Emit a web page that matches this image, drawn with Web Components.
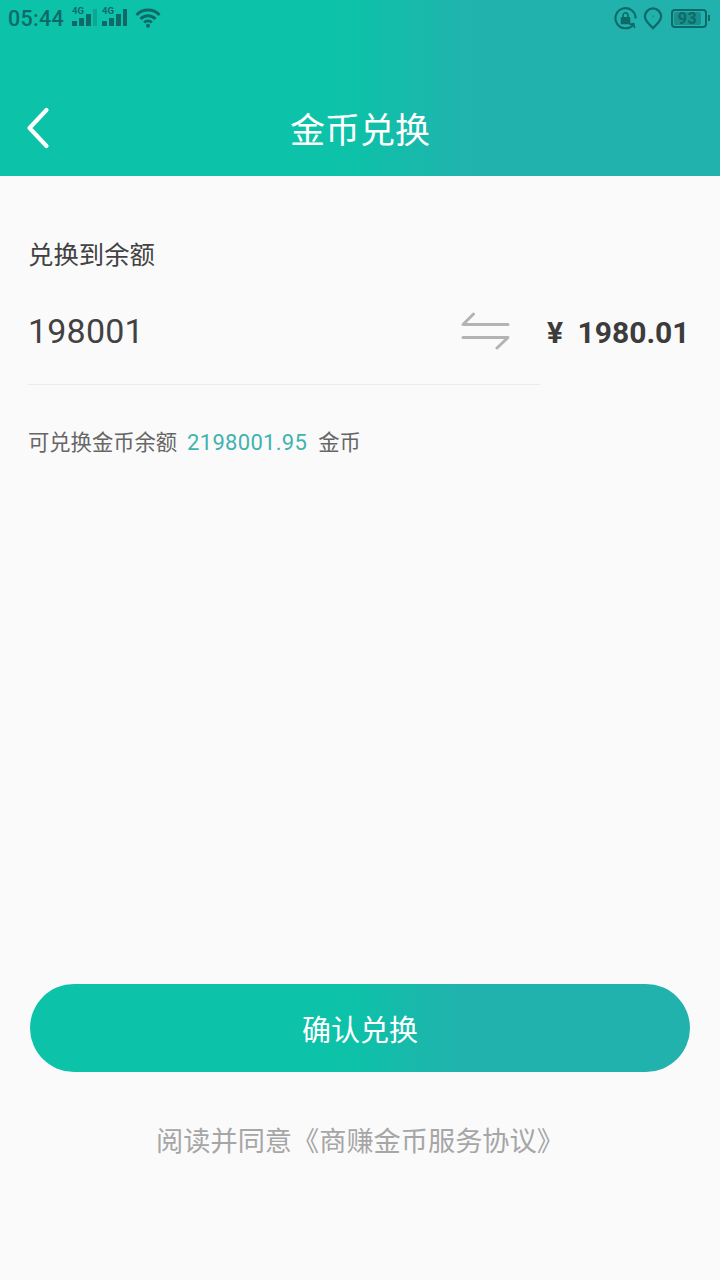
<!DOCTYPE html>
<html lang="zh">
<head>
<meta charset="utf-8">
<title>金币兑换</title>
<style>
  html, body { margin: 0; padding: 0; }
  body { width: 720px; height: 1280px; background: #fbfafb; overflow: hidden;
    font-family: Roboto, "Noto Sans CJK SC", sans-serif; }
  exchange-page { height: 1280px; }
</style>
</head>
<body>
<exchange-page>
  <app-header slot="header" title="金币兑换"></app-header>
  <exchange-form slot="main" coins="198001" money="¥ 1980.01" balance="2198001.95"></exchange-form>
  <confirm-button>确认兑换</confirm-button>
  <agreement-link>阅读并同意《商赚金币服务协议》</agreement-link>
</exchange-page>

<script>
const FONT = 'Roboto, "Noto Sans CJK SC", sans-serif';
const BRAND = "linear-gradient(90deg, #0cc2a8 0%, #0cc2a8 48%, #22b2ae 66%, #22b2ae 100%)";
const INK = "#0e6a68";

class StatusBar extends HTMLElement {
  constructor() {
    super();
    this.attachShadow({ mode: "open" });
  }

  signal(lastOpacity) {
    return `
      <svg width="26" height="30" viewBox="0 0 26 30" fill="${INK}">
        <text x="0" y="11" font-family="Roboto" font-size="9.5" font-weight="700">4G</text>
        <rect x="0" y="18" width="5" height="5"/>
        <rect x="7" y="15" width="5" height="8"/>
        <rect x="14" y="11" width="5" height="12"/>
        <rect x="21" y="6" width="4" height="17" opacity="${lastOpacity}"/>
      </svg>`;
  }

  connectedCallback() {
    this.shadowRoot.innerHTML = `
      <style>
        :host { display: flex; height: 36px; padding: 0 10px 0 8px; align-items: center;
          justify-content: space-between; color: ${INK}; font-family: ${FONT}; }
        .side { display: flex; align-items: center; }
        .time { width: 64px; font-size: 21.5px; font-weight: 500; letter-spacing: 0.3px; }
        .signal { margin-right: 4px; display: flex; }
        .wifi { margin-left: 3px; }
        .batt { margin-left: 8px; width: 36px; height: 19px; border: 2px solid ${INK};
          border-radius: 4px; box-sizing: border-box; padding: 1px 4px 1px 1px; display: flex; }
        .level { flex: 1; background: #1a8f8c; border-radius: 2px; font-size: 16px; font-weight: 700;
          line-height: 13px; text-align: center; letter-spacing: 0.6px; }
        .tip { width: 2px; height: 6px; background: ${INK}; margin-left: 1px; }
      </style>
      <div class="side">
        <span class="time">05:44</span>
        <span class="signal">${this.signal(0.3)}</span>
        <span class="signal">${this.signal(1)}</span>
        <svg class="wifi" width="26" height="20" viewBox="0 0 26 20" fill="none" stroke="${INK}" stroke-width="3">
          <path d="M1.5 7 A16 16 0 0 1 24.5 7"/>
          <path d="M5.5 11 A10.5 10.5 0 0 1 20.5 11"/>
          <path d="M9.2 14.5 A5.5 5.5 0 0 1 16.8 14.5"/>
          <circle cx="13" cy="17.8" r="2" fill="${INK}" stroke="none"/>
        </svg>
      </div>
      <div class="side">
        <svg width="23" height="23" viewBox="0 0 24 24" fill="none" stroke="${INK}" stroke-width="2.2">
          <path d="M20 18.5 A10.5 10.5 0 1 1 22.5 12"/>
          <path d="M21.5 22 L20.5 17.5 L16 18" stroke-width="1.8"/>
          <rect x="7" y="10.5" width="10" height="7.5" rx="1" fill="${INK}" stroke="none"/>
          <path d="M9.5 11 V8.5 a2.5 2.5 0 0 1 5 0 V11" stroke-width="1.7"/>
        </svg>
        <svg style="margin-left:6px" width="20" height="23" viewBox="0 0 20 24" fill="none" stroke="${INK}" stroke-width="2.4">
          <path d="M10 22 C5 17.5 1.5 14 1.5 10 A8.5 8.5 0 0 1 18.5 10 C18.5 14 15 17.5 10 22 Z"/>
          <circle cx="10" cy="10" r="1.3" fill="#14a08f" stroke="none"/>
        </svg>
        <span class="batt"><span class="level">93</span></span>
        <span class="tip"></span>
      </div>`;
  }
}

class AppHeader extends HTMLElement {
  constructor() {
    super();
    this.attachShadow({ mode: "open" });
  }

  connectedCallback() {
    this.shadowRoot.innerHTML = `
      <style>
        :host { display: block; height: 176px; background: ${BRAND}; font-family: ${FONT}; }
        .bar { display: grid; grid-template-columns: 100px 1fr 100px; align-items: center;
          height: 88px; margin-top: 52px; color: #fff; }
        .back { padding: 0 0 9px 26px; display: flex; }
        h1 { margin: 0; font-size: 35px; font-weight: 400; text-align: center; line-height: 48px; }
      </style>
      <status-bar></status-bar>
      <div class="bar">
        <div class="back">
          <svg width="24" height="42" viewBox="0 0 24 42" fill="none" stroke="#fff" stroke-width="4.2" stroke-linecap="round" stroke-linejoin="round">
            <path d="M20.5 3 L3.5 21 L20.5 39"/>
          </svg>
        </div>
        <h1>${this.getAttribute("title")}</h1>
      </div>`;
  }
}

class ExchangeForm extends HTMLElement {
  constructor() {
    super();
    this.attachShadow({ mode: "open" });
  }

  connectedCallback() {
    this.shadowRoot.innerHTML = `
      <style>
        :host { display: block; padding: 60px 30px 0 28px; color: #424242; font-family: ${FONT}; }
        .label { font-size: 25.4px; line-height: 38px; }
        .row { display: flex; align-items: center; height: 75px; margin-top: 19px; }
        .coins { width: 433px; font-size: 34px; letter-spacing: 0.2px; }
        .swap { display: flex; width: 86px; }
        .money { padding-top: 3px; font-size: 30px; font-weight: 700; white-space: nowrap; word-spacing: 7px; color: #3c3c3c; }
        .line { width: 512px; height: 1px; background: #ececec; margin-top: 16px; }
        .avail { display: flex; margin-top: 43px; font-size: 21.3px; line-height: 30px; color: #666; }
        .avail b { font-weight: 400; color: #3fb3ae; font-size: 22px; margin: 0 11px 0 10px; letter-spacing: 0.3px; }
      </style>
      <div class="label">兑换到余额</div>
      <div class="row">
        <span class="coins">${this.getAttribute("coins")}</span>
        <span class="swap">
          <svg width="50" height="38" viewBox="0 0 50 38" fill="none" stroke="#b3b3b3" stroke-width="3" stroke-linecap="round" stroke-linejoin="round">
            <path d="M12.5 2 L2 12.5 H47"/>
            <path d="M2 25.5 H47 L36 36"/>
          </svg>
        </span>
        <span class="money">${this.getAttribute("money")}</span>
      </div>
      <div class="line"></div>
      <div class="avail">可兑换金币余额<b>${this.getAttribute("balance")}</b>金币</div>`;
  }
}

class ConfirmButton extends HTMLElement {
  constructor() {
    super();
    this.attachShadow({ mode: "open" }).innerHTML = `
      <style>
        :host { display: flex; height: 88px; margin: 0 30px; border-radius: 44px; align-items: center;
          justify-content: center; color: #fff; font-size: 29px; font-family: ${FONT};
          background: ${BRAND}; }
      </style>
      <slot></slot>`;
  }
}

class AgreementLink extends HTMLElement {
  constructor() {
    super();
    this.attachShadow({ mode: "open" }).innerHTML = `
      <style>
        :host { display: block; margin-top: 50px; text-align: center; color: #a6a6a6;
          font-size: 27.2px; line-height: 40px; font-family: ${FONT}; }
      </style>
      <slot></slot>`;
  }
}

class ExchangePage extends HTMLElement {
  constructor() {
    super();
    this.attachShadow({ mode: "open" }).innerHTML = `
      <style>
        :host { display: flex; flex-direction: column; }
        .grow { flex: 1; }
        .foot { padding-bottom: 118px; }
      </style>
      <slot name="header"></slot>
      <div class="grow"><slot name="main"></slot></div>
      <div class="foot"><slot></slot></div>`;
  }
}

customElements.define("status-bar", StatusBar);
customElements.define("app-header", AppHeader);
customElements.define("exchange-form", ExchangeForm);
customElements.define("confirm-button", ConfirmButton);
customElements.define("agreement-link", AgreementLink);
customElements.define("exchange-page", ExchangePage);
</script>
</body>
</html>
